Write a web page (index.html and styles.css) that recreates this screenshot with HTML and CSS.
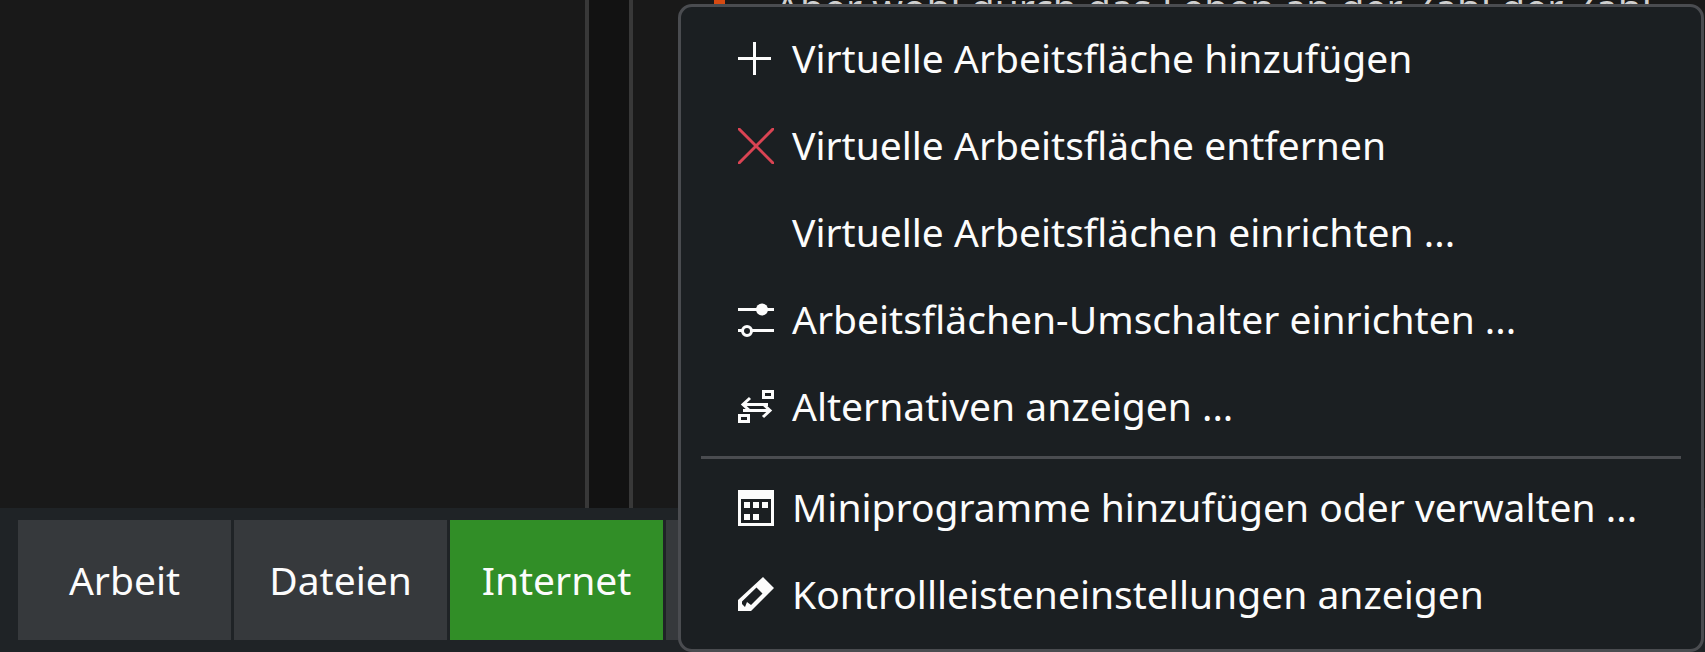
FILE: index.html
```html
<!DOCTYPE html>
<html lang="de">
<head>
    <meta charset="UTF-8">
    <meta name="viewport" content="width=device-width, initial-scale=1.0">
    <title>Kontrollleiste</title>
    <link rel="stylesheet" href="styles.css">
</head>
<body>
    <div class="desktop">
        <div class="side-pane"></div>
        <div class="narrow-pane"></div>
        <div class="doc-pane">
            <span class="doc-marker"></span>
            <p class="doc-text">Aber wohl durch das Leben an der Zahl der Zahl</p>
        </div>
    </div>

    <div class="panel">
        <div class="pager-tab">Arbeit</div>
        <div class="pager-tab">Dateien</div>
        <div class="pager-tab active">Internet</div>
        <div class="pager-tab"></div>
    </div>

    <div class="menu">
        <div class="menu-item">
            <svg class="icon" viewBox="0 0 36 36"><path d="M0 17.5H33M16.5 1V34" stroke="#fcfcfc" stroke-width="3" fill="none"/></svg>
            <span class="menu-label">Virtuelle Arbeitsfläche hinzufügen</span>
        </div>
        <div class="menu-item">
            <svg class="icon" viewBox="0 0 36 36"><path d="M1 1L35 35M35 1L1 35" stroke="#da4453" stroke-width="3" stroke-linecap="round" fill="none"/></svg>
            <span class="menu-label">Virtuelle Arbeitsfläche entfernen</span>
        </div>
        <div class="menu-item">
            <span class="icon"></span>
            <span class="menu-label">Virtuelle Arbeitsflächen einrichten ...</span>
        </div>
        <div class="menu-item">
            <svg class="icon" viewBox="0 0 36 36"><path d="M0 7.5H36M0 28.5H36" stroke="#fcfcfc" stroke-width="3" fill="none"/><circle cx="24" cy="7.5" r="6" fill="#fcfcfc"/><circle cx="9" cy="29" r="4.5" fill="#1b1f22" stroke="#fcfcfc" stroke-width="3"/></svg>
            <span class="menu-label">Arbeitsflächen-Umschalter einrichten ...</span>
        </div>
        <div class="menu-item">
            <svg class="icon" viewBox="0 0 36 36"><path fill-rule="evenodd" d="M24 1H36V10H24ZM27 4V7H33V4ZM0 25H12V34H0ZM3 28V31H9V28Z" fill="#fcfcfc"/><path d="M30 15.5H6M12 9L5 15.5L12 22M5 21.5H31M25 15L32 21.5L25 28" stroke="#fcfcfc" stroke-width="3" fill="none"/></svg>
            <span class="menu-label">Alternativen anzeigen ...</span>
        </div>
        <div class="menu-separator"></div>
        <div class="menu-item">
            <svg class="icon" viewBox="0 0 36 36"><path fill-rule="evenodd" d="M0 0H36V36H0ZM3 9V33H33V9ZM6 12H12V18H6ZM15 12H21V18H15ZM24 12H30V18H24ZM6 24H12V30H6ZM15 24H21V30H15Z" fill="#fcfcfc"/></svg>
            <span class="menu-label">Miniprogramme hinzufügen oder verwalten ...</span>
        </div>
        <div class="menu-item">
            <svg class="icon" viewBox="0 0 36 36"><path fill-rule="evenodd" d="M25 0L36 11L13 34H0V23ZM18.5 10.5L24.5 16.5L13 28L9 25L7 30L4 27V24.5Z" fill="#fcfcfc"/></svg>
            <span class="menu-label">Kontrollleisteneinstellungen anzeigen</span>
        </div>
    </div>
</body>
</html>
```

FILE: styles.css
```css
html, body {
    margin: 0;
    height: 100%;
}

body {
    width: 1705px;
    height: 652px;
    overflow: hidden;
    position: relative;
    display: flex;
    flex-direction: column;
    background-color: #191919;
    font-family: "Noto Sans", sans-serif;
    color: #fcfcfc;
}

.desktop {
    height: 508px;
    display: flex;
    overflow: hidden;
}

.side-pane {
    width: 585px;
    background-color: #191919;
    border-right: 4px solid #383838;
}

.narrow-pane {
    width: 40px;
    background-color: #121212;
    border-right: 4px solid #383838;
}

.doc-pane {
    flex: 1;
    display: flex;
    align-items: flex-start;
    overflow: hidden;
    padding-left: 81px;
}

.doc-marker {
    width: 11px;
    height: 4px;
    background-color: #d64a12;
    flex-shrink: 0;
}

.doc-text {
    margin: -19px 0 0 50px;
    font-size: 39px;
    line-height: 52px;
    white-space: nowrap;
    color: #d0d0d0;
}

.panel {
    height: 144px;
    display: flex;
    gap: 3px;
    padding: 12px 0 12px 18px;
    box-sizing: border-box;
    background-color: #1f2326;
}

.pager-tab {
    width: 213px;
    padding-bottom: 2px;
    box-sizing: border-box;
    display: flex;
    align-items: center;
    justify-content: center;
    background-color: #36393c;
    font-size: 39px;
}

.pager-tab.active {
    background-color: #318e27;
}

.menu {
    position: absolute;
    left: 678px;
    top: 4px;
    width: 1026px;
    height: 648px;
    box-sizing: border-box;
    padding: 8px 20px 0;
    background-color: #1b1f22;
    border: 3px solid #4a4c50;
    border-radius: 14px;
}

.menu-item {
    height: 87px;
    display: flex;
    align-items: center;
    gap: 18px;
    padding-left: 37px;
    font-size: 39px;
    white-space: nowrap;
}

.menu-label {
    padding-bottom: 2px;
}

.icon {
    width: 36px;
    height: 36px;
    flex-shrink: 0;
}

.menu-separator {
    height: 3px;
    margin: 6px 0 5px;
    background-color: #4a4c50;
}
```
